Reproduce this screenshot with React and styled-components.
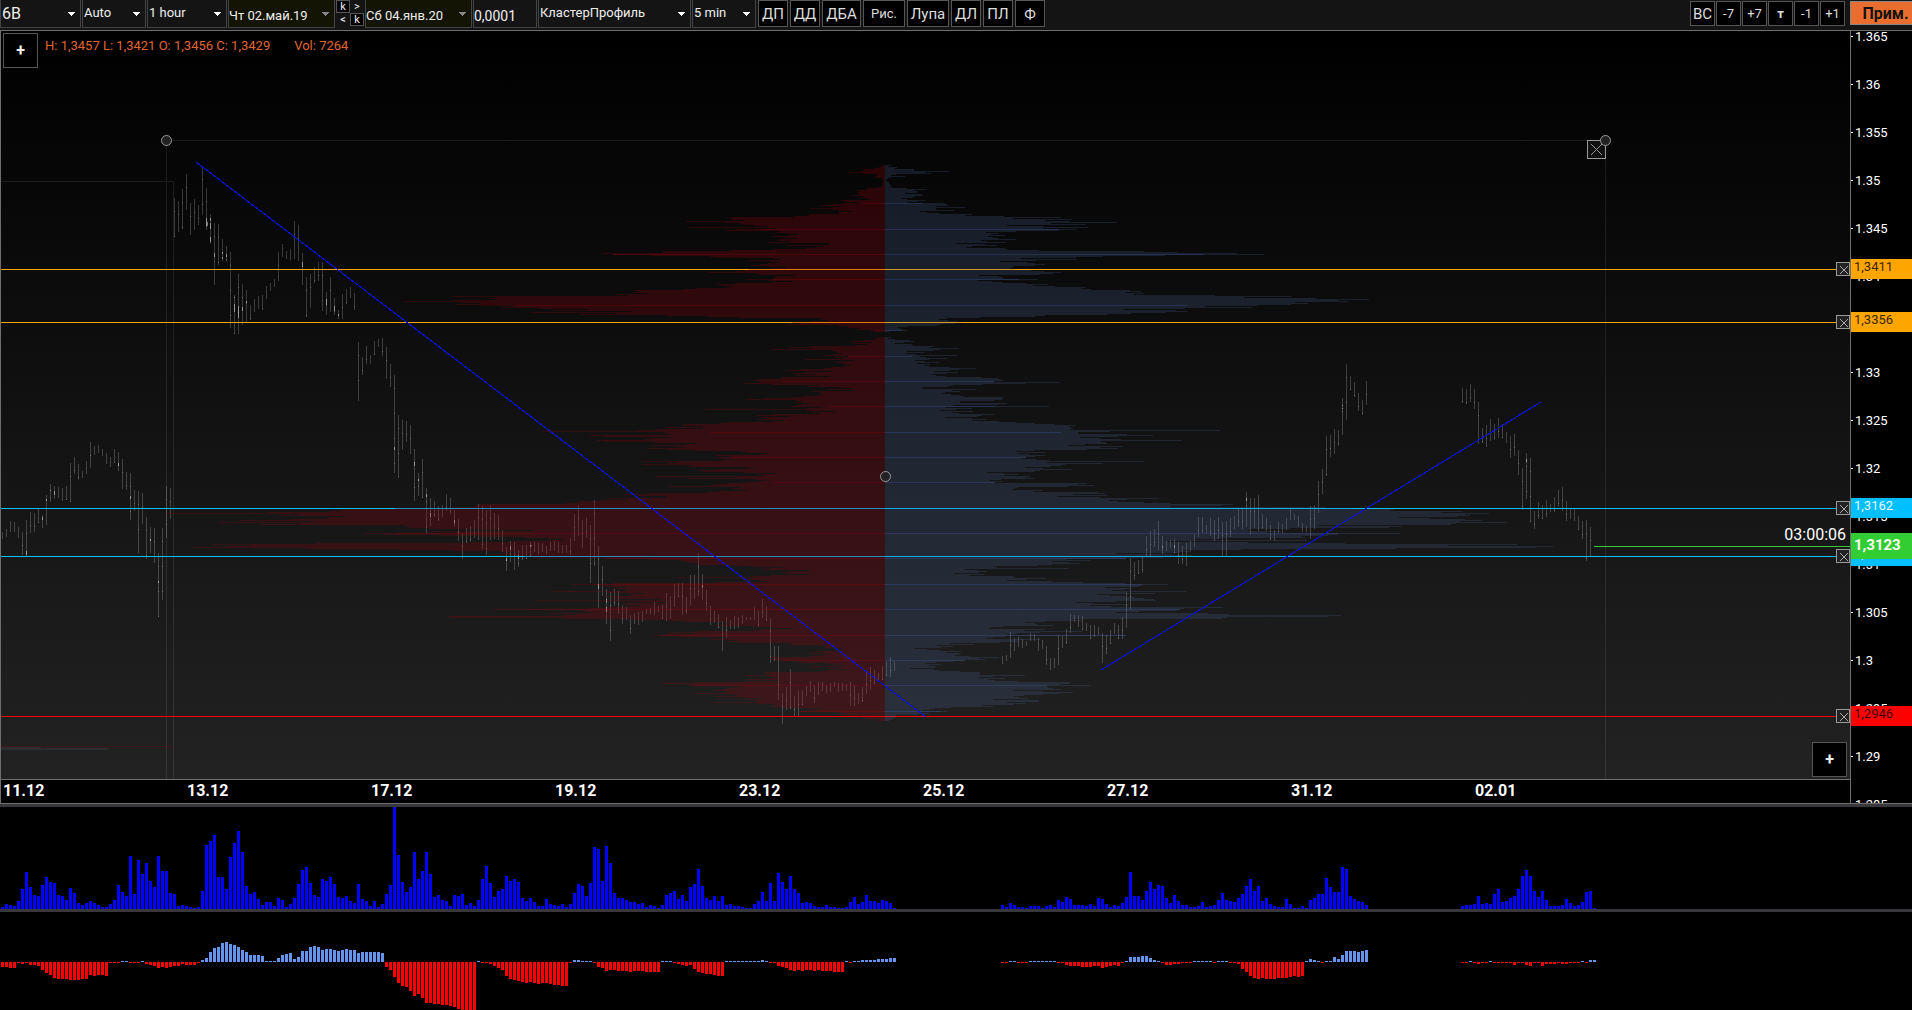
import React from "react";
import styled, { createGlobalStyle } from "styled-components";

const CHART_TOP = 31;
const BAR_STEP = 4;
const PROFILE_X = 885;
const PROFILE_Y = 165;

// one value per price row, 20 rows to a line
const askRows = [
  3, 3, 6, 11, 22, 21, 24, 36, 21, 8, 8, 9, 10, 2, 2, 2, 1, 3, 3, 3,
  3, 3, 8, 18, 18, 30, 25, 27, 27, 26, 33, 21, 24, 20, 15, 44, 39, 28, 41, 51,
  65, 43, 52, 75, 54, 47, 32, 46, 46, 75, 78, 91, 158, 153, 153, 140, 199, 160, 145, 142,
  131, 118, 196, 109, 150, 160, 105, 109, 97, 87, 96, 114, 103, 88, 106, 106, 95, 117, 55, 57,
  98, 61, 68, 79, 112, 154, 222, 222, 283, 272, 234, 175, 169, 112, 104, 136, 115, 107, 117, 125,
  134, 115, 99, 113, 136, 140, 148, 178, 129, 126, 90, 110, 110, 111, 139, 117, 92, 114, 149, 168,
  163, 153, 158, 190, 202, 250, 246, 252, 238, 269, 257, 433, 389, 395, 389, 432, 482, 424, 405, 429,
  405, 374, 384, 345, 296, 332, 254, 355, 270, 305, 218, 178, 146, 61, 65, 56, 75, 93, 85, 98,
  47, 37, 37, 24, 28, 15, 10, 0, 0, 0, 0, 0, 4, 9, 9, 22, 35, 13, 32, 18,
  29, 76, 96, 72, 114, 53, 50, 47, 43, 51, 60, 37, 49, 42, 81, 31, 46, 49, 43, 39,
  35, 41, 53, 61, 85, 99, 53, 80, 92, 70, 89, 55, 103, 105, 126, 131, 125, 126, 142, 114,
  66, 78, 46, 33, 58, 31, 73, 64, 66, 62, 68, 82, 92, 121, 139, 89, 83, 89, 75, 84,
  88, 94, 63, 78, 180, 78, 49, 73, 65, 112, 129, 95, 123, 117, 127, 101, 112, 158, 166, 202,
  202, 182, 219, 182, 229, 247, 342, 222, 219, 214, 295, 280, 214, 235, 240, 288, 280, 230, 189, 198,
  234, 210, 201, 237, 217, 191, 144, 137, 117, 125, 169, 155, 165, 167, 150, 162, 243, 208, 218, 243,
  193, 198, 137, 131, 168, 185, 181, 142, 109, 127, 122, 230, 148, 198, 130, 119, 127, 138, 158, 167,
  175, 217, 144, 152, 147, 137, 167, 177, 238, 260, 246, 218, 218, 277, 258, 284, 306, 308, 319, 405,
  408, 410, 432, 490, 542, 545, 555, 618, 719, 586, 604, 540, 557, 557, 595, 646, 572, 666, 584, 626,
  480, 478, 475, 455, 405, 352, 454, 429, 521, 501, 444, 405, 362, 337, 321, 338, 372, 413, 569, 673,
  634, 659, 692, 579, 485, 431, 385, 368, 383, 398, 372, 360, 352, 275, 235, 205, 200, 197, 187, 190,
  148, 132, 102, 115, 122, 75, 95, 103, 100, 77, 115, 132, 208, 133, 138, 125, 117, 168, 272, 312,
  272, 280, 260, 272, 258, 260, 333, 277, 242, 257, 253, 280, 268, 275, 225, 349, 247, 218, 258, 262,
  245, 255, 278, 295, 391, 305, 300, 292, 338, 310, 322, 435, 438, 322, 250, 215, 199, 155, 160, 160,
  170, 132, 115, 93, 122, 132, 188, 216, 192, 218, 231, 205, 157, 162, 175, 148, 157, 148, 93, 95,
  58, 62, 60, 42, 51, 43, 68, 60, 75, 58, 63, 72, 115, 110, 115, 103, 83, 88, 56, 52,
  42, 75, 45, 57, 38, 57, 65, 120, 120, 115, 139, 117, 107, 115, 137, 107, 136, 190, 225, 198,
  195, 145, 150, 158, 162, 170, 157, 162, 190, 152, 148, 169, 142, 122, 138, 130, 127, 172, 128, 107,
  114, 113, 102, 65, 78, 68, 85, 48, 43, 45, 35, 28, 23, 19, 5, 8,
];

const bidRows = [
  6, 3, 12, 10, 29, 29, 64, 40, 46, 11, 6, 20, 5, 3, 1, 1, 2, 4, 4, 5,
  6, 5, 7, 21, 42, 30, 33, 32, 20, 36, 38, 30, 28, 17, 22, 41, 33, 22, 60, 62,
  64, 51, 80, 51, 51, 69, 35, 42, 54, 87, 80, 119, 176, 128, 187, 160, 185, 232, 166, 201,
  122, 159, 203, 158, 192, 173, 131, 101, 113, 106, 120, 103, 108, 113, 131, 96, 102, 121, 71, 100,
  112, 87, 82, 120, 122, 154, 259, 292, 352, 379, 280, 218, 191, 136, 192, 151, 115, 142, 150, 160,
  149, 129, 128, 125, 130, 146, 159, 176, 168, 155, 94, 114, 118, 118, 153, 92, 107, 117, 141, 163,
  148, 170, 201, 196, 206, 245, 256, 241, 259, 249, 330, 406, 359, 431, 484, 453, 463, 410, 423, 406,
  372, 320, 367, 300, 239, 291, 302, 281, 246, 222, 160, 150, 95, 61, 54, 63, 72, 76, 70, 56,
  52, 23, 12, 15, 18, 22, 4, 0, 0, 0, 0, 0, 6, 3, 10, 25, 29, 19, 10, 27,
  28, 49, 45, 74, 55, 48, 22, 39, 21, 31, 72, 35, 41, 62, 44, 30, 40, 54, 32, 45,
  39, 44, 65, 91, 74, 64, 49, 73, 61, 47, 51, 60, 96, 113, 115, 118, 109, 175, 140, 98,
  68, 63, 38, 37, 91, 67, 75, 60, 57, 66, 75, 79, 118, 118, 117, 109, 75, 75, 122, 113,
  68, 164, 60, 87, 71, 55, 88, 67, 74, 109, 97, 92, 60, 87, 101, 87, 114, 131, 149, 170,
  191, 184, 186, 188, 185, 335, 225, 193, 193, 242, 268, 233, 195, 215, 236, 297, 216, 220, 222, 200,
  183, 238, 215, 233, 202, 149, 131, 160, 132, 145, 160, 150, 141, 136, 151, 164, 259, 162, 218, 180,
  176, 165, 140, 158, 187, 155, 150, 102, 119, 133, 119, 145, 140, 149, 116, 105, 117, 110, 202, 193,
  209, 183, 132, 130, 127, 157, 148, 213, 220, 188, 222, 172, 215, 274, 242, 224, 233, 259, 285, 348,
  337, 285, 441, 467, 509, 505, 578, 556, 604, 580, 585, 572, 514, 545, 580, 597, 575, 622, 571, 566,
  434, 516, 504, 405, 365, 363, 396, 382, 515, 453, 443, 417, 420, 335, 309, 422, 283, 363, 460, 632,
  563, 668, 651, 511, 356, 297, 306, 294, 231, 287, 307, 290, 278, 241, 181, 205, 167, 184, 195, 167,
  153, 108, 112, 183, 79, 92, 102, 94, 69, 99, 84, 128, 129, 161, 141, 122, 167, 198, 240, 283,
  257, 254, 220, 245, 240, 227, 301, 240, 270, 212, 225, 240, 250, 259, 269, 271, 231, 191, 207, 244,
  205, 226, 338, 299, 295, 292, 254, 231, 323, 344, 456, 443, 342, 337, 188, 198, 160, 140, 150, 153,
  169, 118, 106, 103, 160, 139, 198, 155, 132, 122, 241, 120, 108, 101, 155, 132, 134, 115, 65, 89,
  52, 68, 56, 29, 42, 55, 76, 61, 74, 75, 70, 84, 114, 94, 100, 80, 68, 51, 40, 56,
  44, 51, 50, 25, 49, 54, 75, 95, 95, 94, 140, 108, 94, 120, 103, 110, 132, 186, 184, 174,
  206, 162, 163, 168, 176, 128, 158, 188, 174, 158, 139, 129, 134, 143, 108, 154, 154, 122, 141, 128,
  98, 108, 66, 49, 44, 37, 62, 35, 44, 33, 11, 11, 11, 9, 7, 4,
];

// round price levels: [y, ask length, bid length]
const levels = [
  [203, 23, 38], [229, 125, 174], [254, 272, 319], [279, 113, 134], [305, 370, 302],
  [330, 10, 16], [356, 37, 27], [381, 102, 109], [406, 56, 110], [432, 175, 176],
  [457, 152, 141], [482, 112, 109], [533, 489, 453], [558, 280, 241], [584, 291, 257],
  [609, 358, 295], [635, 225, 241], [660, 103, 80], [685, 190, 162], [711, 85, 56],
];

const candleRuns = [
  {
    start: 0,
    bars: [
      [532, 539], [529, 537], [521, 532], [522, 532], [527, 538], [532, 555], [520, 556], [512, 533],
      [513, 532], [509, 523], [515, 528], [495, 525], [484, 502], [486, 499], [487, 498], [488, 501],
      [486, 500], [463, 502], [457, 474], [464, 480], [471, 478], [461, 474], [442, 468], [446, 455],
      [445, 453], [449, 456], [453, 464], [457, 467], [449, 463], [452, 471], [459, 489], [472, 490],
      [473, 520], [490, 511], [491, 553], [493, 524], [517, 559], [527, 553], [528, 563], [553, 617],
      [528, 600], [486, 538], [488, 519], [198, 237], [201, 232], [189, 229], [174, 210], [203, 235],
      [199, 230], [205, 225], [166, 215], [188, 230], [214, 244], [223, 285], [224, 265], [239, 261],
      [246, 262], [252, 328], [295, 334], [274, 334], [284, 325], [290, 322], [305, 320], [299, 312],
      [296, 309], [295, 310], [286, 299], [283, 291], [279, 287], [252, 281], [244, 257], [251, 259],
      [249, 260], [221, 259], [225, 261], [253, 285], [277, 317], [274, 308], [267, 283], [262, 281],
      [262, 311], [292, 315], [277, 312], [298, 315], [310, 319], [294, 319], [289, 304], [287, 298],
      [293, 310], [342, 401], [357, 375], [346, 364], [355, 364], [341, 355], [339, 347], [338, 356],
      [347, 379], [364, 387], [375, 473], [415, 478], [420, 450], [421, 442], [425, 454], [449, 501],
      [473, 496], [459, 498], [488, 533], [498, 526], [501, 517], [506, 521], [505, 517], [494, 511],
      [498, 514], [510, 527], [519, 541], [533, 559], [528, 543], [526, 542], [520, 538], [504, 540],
      [506, 549], [510, 555], [505, 540], [513, 539], [515, 540], [530, 552], [547, 571], [541, 562],
      [542, 570], [550, 567], [545, 560], [545, 559], [542, 556], [542, 552], [543, 554], [543, 552],
      [546, 554], [542, 551], [541, 551], [542, 553], [545, 553], [545, 553], [538, 555], [514, 541],
      [505, 536], [520, 548], [518, 538], [525, 583], [500, 566], [546, 608], [566, 596], [589, 624],
      [592, 641], [589, 606], [591, 614], [605, 624], [607, 620], [615, 634], [613, 624], [612, 625],
      [611, 622], [609, 614], [608, 614], [602, 615], [606, 612], [605, 619], [593, 621], [596, 619],
      [584, 607], [583, 597], [583, 615], [597, 614], [575, 606], [575, 599], [553, 596], [574, 600],
      [590, 611], [606, 625], [611, 623], [614, 628], [621, 651], [617, 638], [620, 629], [616, 629],
      [617, 628], [615, 624], [617, 620], [617, 620], [607, 620], [611, 627], [599, 618], [606, 621],
      [618, 663], [646, 661], [646, 700], [693, 724], [687, 710], [669, 709], [696, 716], [691, 716],
      [691, 705], [686, 696], [681, 692], [685, 703], [682, 695], [682, 691], [685, 693], [683, 692],
      [682, 687], [683, 692], [683, 691], [684, 691], [682, 706], [685, 706], [693, 704], [687, 702],
      [671, 694], [667, 689], [670, 684], [673, 682], [666, 680], [662, 676], [657, 677], [661, 671],
    ],
  },
  {
    start: 250,
    bars: [
      [656, 664], [655, 661], [632, 658], [638, 651], [637, 647], [639, 648], [641, 646], [633, 641],
      [634, 641], [638, 651], [640, 649], [646, 665], [658, 670], [658, 668], [635, 665], [636, 648],
      [629, 644], [614, 633], [615, 622], [615, 627], [616, 630], [623, 631], [625, 639], [625, 637],
      [627, 635], [633, 663], [635, 654], [630, 644], [623, 634], [625, 639], [617, 639], [592, 628],
      [558, 609], [562, 580], [560, 574], [556, 573], [536, 557], [531, 556], [529, 547], [521, 550],
      [536, 554], [541, 551], [540, 548], [539, 553], [542, 564], [546, 564], [543, 566], [541, 551],
      [534, 547], [517, 537], [517, 533], [525, 533], [518, 536], [520, 541], [517, 539], [522, 556],
      [521, 556], [518, 537], [516, 529], [508, 527], [508, 529], [492, 527], [498, 535], [498, 528],
      [495, 531], [514, 529], [518, 531], [525, 540], [530, 541], [522, 533], [524, 533], [518, 530],
      [509, 520], [514, 520], [516, 527], [523, 532], [526, 532], [506, 539], [505, 529], [481, 513],
      [469, 494], [436, 476], [435, 457], [429, 454], [430, 446], [398, 435], [364, 420], [376, 390],
      [382, 397], [393, 411], [400, 415], [381, 405],
    ],
  },
  {
    start: 365,
    bars: [
      [388, 403], [389, 404], [384, 402], [389, 409], [402, 444], [428, 443], [425, 447], [419, 441],
      [424, 440], [418, 438], [424, 438], [432, 443], [436, 458], [434, 456], [450, 475], [468, 510],
      [453, 499], [458, 522], [511, 529], [502, 519], [505, 519], [500, 517], [504, 512], [497, 512],
      [490, 507], [487, 511], [501, 521], [508, 519], [509, 521], [516, 530], [521, 539], [520, 561],
      [527, 556],
    ],
  },
];

// [x, y, height] of the densest clusters
const hotSpots = [
  [206, 218, 8], [207, 222, 4], [210, 218, 3], [210, 223, 6], [210, 237, 5], [214, 253, 4],
  [222, 252, 2], [222, 257, 2], [226, 254, 3], [234, 297, 1], [234, 304, 8], [238, 306, 12],
  [242, 307, 4], [246, 301, 2], [302, 262, 5], [326, 299, 6], [334, 306, 5], [338, 314, 2],
  [118, 463, 3], [130, 496, 3], [50, 490, 1], [54, 491, 4], [42, 517, 3], [46, 499, 2],
  [26, 551, 4], [150, 539, 2], [158, 581, 2], [394, 447, 3], [414, 462, 4], [418, 479, 2],
  [426, 494, 3], [430, 513, 4], [454, 520, 3], [506, 558, 3], [510, 546, 4], [518, 555, 4],
  [530, 545, 2], [531, 545, 1], [598, 584, 5], [606, 599, 3], [606, 607, 5], [702, 585, 2],
  [1162, 546, 2], [1174, 545, 3], [1246, 498, 3], [1342, 405, 1], [1342, 408, 1], [1526, 459, 3],
];

const volumeRuns = [
  {
    start: 0,
    bars: [
      2, 5, 4, 3, 8, 20, 37, 22, 14, 13, 24, 32, 27, 26, 14, 13, 9, 21, 16, 6,
      4, 6, 8, 6, 4, 2, 2, 5, 9, 24, 17, 13, 53, 15, 49, 35, 46, 28, 22, 53,
      38, 38, 16, 15, 3, 4, 3, 2, 1, 2, 18, 64, 68, 74, 32, 32, 20, 52, 66, 78,
      57, 23, 15, 17, 10, 4, 7, 7, 3, 11, 9, 2, 5, 11, 25, 39, 42, 26, 14, 12,
      30, 28, 32, 25, 12, 11, 13, 8, 6, 25, 10, 8, 3, 8, 2, 5, 15, 24, 102, 54,
      27, 17, 22, 57, 30, 38, 57, 35, 12, 14, 9, 8, 3, 14, 13, 15, 4, 6, 3, 9,
      30, 43, 26, 12, 18, 20, 33, 28, 30, 27, 11, 8, 11, 7, 3, 3, 10, 5, 4, 3,
      5, 2, 5, 16, 25, 23, 13, 26, 62, 60, 28, 63, 46, 16, 11, 11, 9, 7, 7, 5,
      6, 2, 4, 3, 1, 4, 14, 16, 18, 10, 14, 8, 22, 25, 40, 23, 11, 9, 13, 8,
      13, 4, 5, 3, 3, 2, 1, 1, 5, 8, 17, 8, 26, 8, 36, 27, 20, 33, 20, 16,
      6, 7, 6, 3, 2, 2, 4, 2, 2, 1, 1, 2, 7, 12, 5, 7, 14, 8, 8, 6,
      9, 8, 6, 1,
    ],
  },
  {
    start: 250,
    bars: [
      4, 2, 6, 4, 2, 2, 1, 3, 3, 3, 1, 3, 4, 2, 9, 7, 12, 10, 4, 4,
      4, 3, 5, 3, 11, 10, 5, 2, 4, 3, 6, 12, 37, 13, 13, 9, 18, 27, 20, 24,
      23, 11, 6, 14, 8, 4, 4, 2, 2, 3, 7, 2, 3, 4, 9, 16, 9, 8, 7, 11,
      15, 23, 30, 18, 23, 8, 11, 5, 3, 2, 2, 10, 5, 1, 1, 3, 1, 9, 11, 15,
      15, 31, 22, 17, 17, 42, 40, 13, 10, 8, 7, 4,
    ],
  },
  {
    start: 365,
    bars: [
      3, 4, 4, 5, 13, 5, 6, 5, 15, 20, 7, 8, 11, 13, 20, 33, 39, 33, 18, 12,
      18, 9, 3, 3, 3, 4, 10, 6, 3, 4, 7, 17, 18, 1,
    ],
  },
];

const deltaRuns = [
  {
    start: 0,
    bars: [
      -5, -5, -6, -6, -1, -2, -1, -3, -3, -4, -8, -11, -13, -16, -17, -17, -17, -18, -18, -18,
      -17, -17, -13, -14, -13, -13, -14, -1, -1, -1, 1, 1, -1, -1, -1, 1, -2, -3, -4, -6,
      -5, -6, -5, -4, -4, -2, -3, -3, -3, -1, 2, 4, 10, 14, 15, 19, 20, 18, 17, 15,
      12, 10, 7, 7, 7, 6, 1, 1, 1, 4, 7, 8, 9, 3, 5, 11, 11, 15, 16, 15,
      12, 13, 13, 12, 11, 12, 13, 12, 12, 9, 10, 10, 10, 10, 10, 9, -5, -8, -15, -21,
      -24, -25, -29, -34, -32, -36, -41, -41, -42, -42, -43, -43, -44, -45, -47, -48, -48, -48, -48, 1,
      -1, -1, -2, -4, -6, -8, -14, -17, -18, -19, -20, -21, -20, -21, -22, -21, -21, -22, -23, -23,
      -24, -24, -1, 2, 2, 1, 1, 1, -1, -5, -6, -9, -8, -8, -9, -9, -9, -10, -9, -9,
      -9, -10, -10, -10, -10, 1, 1, 1, -1, -2, -3, -4, -3, -7, -10, -11, -12, -12, -13, -14,
      -14, 1, 1, 1, 1, 1, 1, 1, 1, 1, 2, 1, -1, -1, -4, -5, -6, -8, -9, -8,
      -9, -8, -8, -9, -8, -9, -9, -9, -10, -10, -10, 1, -1, 1, 1, 2, 2, 2, 2, 3,
      3, 3, 4, 4,
    ],
  },
  {
    start: 250,
    bars: [
      -1, -1, 1, 1, -1, -1, -1, 1, 1, 1, 1, 1, 1, 1, -1, -1, -3, -4, -4, -4,
      -5, -5, -5, -4, -4, -6, -5, -4, -3, -4, -1, 1, 5, 5, 5, 6, 6, 4, 2, 1,
      -1, -3, -3, -2, -2, -1, -1, -1, 1, 1, 1, 1, 1, -1, 1, 1, 1, -1, -1, -2,
      -7, -10, -14, -16, -17, -16, -17, -17, -17, -16, -16, -16, -15, -14, -15, -14, 1, 3, 2, 1,
      -1, 1, 1, 5, 3, 7, 11, 11, 11, 10, 11, 12,
    ],
  },
  {
    start: 365,
    bars: [
      -1, -1, 1, -1, -2, -1, -1, 1, -1, -1, -1, -1, -1, -3, -1, -1, -3, -4, -1, -1,
      -4, -2, -2, -2, -1, -2, -2, -1, -1, -1, 1, -1, 2, 2,
    ],
  },
];

const priceTicks = [
  "1.365", "1.36", "1.355", "1.35", "1.345", "1.34", "1.335", "1.33", "1.325",
  "1.32", "1.315", "1.31", "1.305", "1.3", "1.295", "1.29", "1.285",
];

const dates = ["11.12", "13.12", "17.12", "19.12", "23.12", "25.12", "27.12", "31.12", "02.01"];

const priceLines = [
  { price: "1,3411", y: 269, color: "#ffa500", text: "#3a2500" },
  { price: "1,3356", y: 322, color: "#ffa500", text: "#3a2500" },
  { price: "1,3162", y: 508, color: "#00bfff", text: "#e8f8ff" },
  { price: "1,3111", y: 556, color: "#00bfff", text: "#e8f8ff" },
  { price: "1,2946", y: 716, color: "#ff0000", text: "#3a0000" },
];

const drawTools = [
  { label: "ДП", width: 30 },
  { label: "ДД", width: 30 },
  { label: "ДБА", width: 39 },
  { label: "Рис.", width: 42, small: true },
  { label: "Лупа", width: 42 },
  { label: "ДЛ", width: 30 },
  { label: "ПЛ", width: 30 },
  { label: "Ф", width: 30 },
];

const shiftTools = ["ВС", "-7", "+7", "т", "-1", "+1"];

const rowsPath = (rows, dir) =>
  rows
    .map((len, i) => (len ? `M${PROFILE_X} ${PROFILE_Y + i}h${dir * len}v1H${PROFILE_X}z` : ""))
    .join("");

const candlePath = candleRuns
  .flatMap(({ start, bars }) =>
    bars.map(([top, bottom], i) => `M${2 + (start + i) * BAR_STEP} ${top}h1V${bottom}h-1z`)
  )
  .join("");

// brighter ticks where neighbouring clusters join
const jointPath = candleRuns
  .flatMap(({ start, bars }) =>
    bars.flatMap(([top, bottom], i) => {
      const marks = [];
      for (let y = top + 13; y < bottom; y += 25) {
        marks.push(`M${2 + (start + i) * BAR_STEP} ${y}h1v1h-1z`);
      }
      return marks;
    })
  )
  .join("");

const histogramPath = (runs, base, keep = () => true) =>
  runs
    .flatMap(({ start, bars }) =>
      bars.map((v, i) => (keep(v) ? `M${1 + (start + i) * BAR_STEP} ${base}v${-v}h3v${v}z` : ""))
    )
    .join("");

const Caret = ({ color = "#fff" }) => (
  <CaretIcon viewBox="0 0 7 4" aria-hidden="true">
    <path d="M0 0h7v1H6v1H5v1H4v1H3V3H2V2H1V1H0z" fill={color} />
  </CaretIcon>
);

const Picker = ({ label, value, width, large }) => (
  <Field $width={width}>
    <Select aria-label={label} defaultValue={value} $large={large}>
      <option>{value}</option>
    </Select>
    <Caret />
  </Field>
);

const DatePicker = ({ label, value }) => (
  <Field $width={107} $tint>
    <TextInput aria-label={label} defaultValue={value} />
    <Caret color="#888" />
  </Field>
);

const Cross = ({ size = 14 }) => (
  <svg width={size} height={size} viewBox="0 0 14 14" aria-hidden="true">
    <path d="M3 3l8 8M11 3l-8 8" stroke="#aaa" strokeWidth="1" />
  </svg>
);

const Toolbar = () => (
  <Bar>
    <Fields>
      <Picker label="Инструмент" value="6B" width={81} large />
      <Picker label="Масштаб" value="Auto" width={64} />
      <Picker label="Период" value="1 hour" width={80} />
      <DatePicker label="Начало" value="Чт 02.май.19" />
      <StepPad>
        <StepButton $boxed>k</StepButton>
        <StepButton>&gt;</StepButton>
        <StepButton>&lt;</StepButton>
        <StepButton $boxed>k</StepButton>
      </StepPad>
      <DatePicker label="Конец" value="Сб 04.янв.20" />
      <Field $width={64}>
        <TextInput aria-label="Шаг" defaultValue="0,0001" $large />
      </Field>
      <Picker label="Вид" value="КластерПрофиль" width={153} />
      <Picker label="Кластер" value="5 min" width={64} />
    </Fields>
    <Tools>
      {drawTools.map((tool) => (
        <ToolButton key={tool.label} $width={tool.width} $small={tool.small}>
          {tool.label}
        </ToolButton>
      ))}
    </Tools>
    <ShiftTools>
      {shiftTools.map((label, i) => (
        <ShiftButton key={label} $large={i === 0} $bold={label === "т"}>
          {label}
        </ShiftButton>
      ))}
    </ShiftTools>
    <ApplyButton>Прим.</ApplyButton>
  </Bar>
);

const PriceChart = () => (
  <ChartPane>
    <Drawing shapeRendering="crispEdges" aria-hidden="true">
      <g transform={`translate(0 ${-CHART_TOP})`}>
        <path d="M1 746h172v1H1z" fill="rgba(150,0,10,.26)" />
        <path d="M1 747h40v1h68v1h-3v1H1z" fill="#2d2d2f" />
        <path
          d="M0 181h174v598h-1V182H0zM166 140h1440v639h-1V141H167v638h-1z"
          fill="#fff"
          fillOpacity=".09"
        />
        <path d={candlePath} fill="#fff" fillOpacity=".2" />
        <path d={jointPath} fill="#fff" fillOpacity=".22" />
        {hotSpots.map(([x, y, h]) => (
          <rect key={`${x}-${y}`} x={x} y={y} width="1" height={h} fill="#fff" fillOpacity=".45" />
        ))}
        {priceLines.map((line) => (
          <rect key={line.y} x="0" y={line.y} width="100%" height="1" fill={line.color} />
        ))}
        <path d={rowsPath(askRows, -1)} fill="rgba(150,0,10,.26)" />
        <path d={rowsPath(bidRows, 1)} fill="rgba(77,109,163,.22)" />
        {levels.map(([y, ask, bid]) => (
          <g key={y}>
            <rect x={PROFILE_X - ask} y={y} width={ask} height="1" fill="rgba(170,0,10,.25)" />
            <rect x={PROFILE_X} y={y} width={bid} height="1" fill="rgba(70,105,190,.25)" />
          </g>
        ))}
        <path d="M196 162L926 717M1101 670L1541 402" stroke="#0a0aff" strokeWidth="1" />
        <rect x="1594" y="546" width="100%" height="1" fill="#32cd32" />
        <path d="M0 31h1v749H0z" fill="#6e6e6e" />
        <g fill="#222" stroke="#999" shapeRendering="auto">
          <circle cx="166.5" cy="140.5" r="5" />
          <circle cx="885.5" cy="476.5" r="5" />
          <rect x="1587.5" y="140.5" width="18" height="18" fill="#111" />
          <path d="M1591 144l11 11M1602 144l-11 11" />
          <circle cx="1605.5" cy="140.5" r="5" />
        </g>
      </g>
    </Drawing>
    <Legend>
      <AddButton aria-label="Добавить">+</AddButton>
      <Quote>H: 1,3457 L: 1,3421 O: 1,3456 C: 1,3429</Quote>
      <Quote>Vol: 7264</Quote>
    </Legend>
    {priceLines.map((line) => (
      <CloseButton key={line.y} $y={line.y - CHART_TOP} aria-label={`Удалить ${line.price}`}>
        <Cross />
      </CloseButton>
    ))}
    <Countdown>03:00:06</Countdown>
    <CornerButton aria-label="Добавить область">+</CornerButton>
  </ChartPane>
);

const PriceAxis = () => (
  <Axis>
    <TickList>
      {priceTicks.map((tick) => (
        <Tick key={tick}>{tick}</Tick>
      ))}
    </TickList>
    {priceLines.map((line) => (
      <Tag key={line.y} $y={line.y - CHART_TOP} $color={line.color} $text={line.text}>
        {line.price}
      </Tag>
    ))}
    <LastPrice>1,3123</LastPrice>
  </Axis>
);

const App = () => (
  <>
    <GlobalStyle />
    <Page>
      <Toolbar />
      <Main>
        <ChartColumn>
          <PriceChart />
          <DateAxis>
            {dates.map((date) => (
              <DateLabel key={date}>{date}</DateLabel>
            ))}
          </DateAxis>
        </ChartColumn>
        <PriceAxis />
      </Main>
      <Splitter $lined />
      <VolumePane>
        <Drawing shapeRendering="crispEdges" aria-label="Volume" role="img">
          <path d={histogramPath(volumeRuns, 102)} fill="#0000ff" />
        </Drawing>
      </VolumePane>
      <Splitter />
      <DeltaPane>
        <Drawing shapeRendering="crispEdges" aria-label="Delta" role="img">
          <path d={histogramPath(deltaRuns, 50, (v) => v > 0)} fill="#6495ed" />
          <path d={histogramPath(deltaRuns, 50, (v) => v < 0)} fill="#ff0000" />
        </Drawing>
      </DeltaPane>
    </Page>
  </>
);

const GlobalStyle = createGlobalStyle`
  * {
    box-sizing: border-box;
  }

  body {
    margin: 0;
    background: #000;
    color: #eee;
    font-family: Roboto, "Noto Sans", sans-serif;
    font-size: 13px;
    overflow: hidden;
  }

  button,
  input,
  select {
    margin: 0;
    padding: 0;
    color: inherit;
    font-family: inherit;
    border-radius: 0;
  }
`;

const Page = styled.div`
  display: flex;
  flex-direction: column;
  min-height: 100vh;
`;

const Bar = styled.header`
  display: flex;
  align-items: flex-start;
  height: 31px;
  background: #141414;
  border-bottom: 1px solid #6e6e6e;
`;

const Fields = styled.div`
  display: flex;
  gap: 1px;
  margin-right: 2px;
`;

const Field = styled.div`
  display: flex;
  align-items: center;
  width: ${({ $width }) => $width}px;
  height: 28px;
  padding-right: 5px;
  background: ${({ $tint }) => ($tint ? "#141404" : "#141414")};
  border: 1px solid #444;
  border-top: 0;
`;

const Select = styled.select`
  flex: 1;
  min-width: 0;
  height: 24px;
  padding-left: 1px;
  margin-bottom: ${({ $large }) => ($large ? 1 : 3)}px;
  appearance: none;
  background: transparent;
  border: 0;
  outline: 0;
  font-size: ${({ $large }) => ($large ? 16 : 13)}px;
`;

const TextInput = styled.input`
  flex: 1;
  min-width: 0;
  height: 22px;
  margin-top: 4px;
  background: transparent;
  border: 0;
  outline: 0;
  font-size: ${({ $large }) => ($large ? 14 : 13)}px;
`;

const CaretIcon = styled.svg`
  flex: none;
  width: 7px;
  height: 4px;
`;

const StepPad = styled.div`
  display: grid;
  grid-template-columns: 14px 14px;
  grid-template-rows: 13px 13px;
  width: 28px;
`;

const StepButton = styled.button`
  background: ${({ $boxed }) => ($boxed ? "#000" : "transparent")};
  border: 1px solid ${({ $boxed }) => ($boxed ? "#555" : "transparent")};
  font-size: 11px;
  line-height: 11px;
`;

const Tools = styled.div`
  display: flex;
  gap: 2px;
`;

const ToolButton = styled.button`
  width: ${({ $width }) => $width}px;
  height: 27px;
  background: #000;
  border: 1px solid #555;
  color: #ddd;
  font-size: ${({ $small }) => ($small ? 13 : 15)}px;
`;

const ShiftTools = styled.div`
  display: flex;
  gap: 1px;
  margin: 1px 5px 0 auto;
`;

const ShiftButton = styled.button`
  width: 25px;
  height: 25px;
  background: #000;
  border: 1px solid #555;
  color: #ddd;
  font-size: ${({ $large }) => ($large ? 15 : 13)}px;
  font-weight: ${({ $bold }) => ($bold ? 700 : 400)};
`;

const ApplyButton = styled.button`
  width: 62px;
  height: 24px;
  margin-top: 1px;
  padding-left: 8px;
  background: #e96d2e;
  border: 1px solid #888;
  border-right: 0;
  color: #111;
  font-size: 16px;
  font-weight: 700;
`;

const Main = styled.main`
  display: flex;
  background: #000;
`;

const ChartColumn = styled.div`
  flex: 1;
  min-width: 0;
`;

const ChartPane = styled.section`
  position: relative;
  height: 749px;
  background: linear-gradient(#000, #222);
  border-bottom: 1px solid #6e6e6e;
  overflow: hidden;
`;

const Drawing = styled.svg`
  position: absolute;
  inset: 0;
  width: 100%;
  height: 100%;
  fill: none;
`;

const Legend = styled.div`
  position: relative;
  display: flex;
  gap: 24px;
  padding: 2px 3px;
`;

const AddButton = styled.button`
  width: 35px;
  height: 35px;
  margin-right: -17px;
  background: #000;
  border: 1px solid #555;
  font-size: 16px;
  font-weight: 700;
`;

const Quote = styled.span`
  padding-top: 4px;
  color: #e0662e;
  font-size: 13px;
  line-height: 18px;
`;

const CloseButton = styled.button`
  position: absolute;
  top: ${({ $y }) => $y - 7}px;
  right: 0;
  display: grid;
  place-items: center;
  width: 14px;
  height: 14px;
  background: #222;
  border: 1px solid #999;
`;

const Countdown = styled.time`
  position: absolute;
  top: 494px;
  right: 4px;
  color: #fff;
  font-size: 16px;
  line-height: 20px;
`;

const CornerButton = styled(AddButton)`
  position: absolute;
  right: 3px;
  bottom: 2px;
  margin: 0;
`;

const DateAxis = styled.div`
  display: flex;
  height: 23px;
  padding-left: 2px;
  background: #000;
  border-left: 1px solid #6e6e6e;
  overflow: hidden;
`;

const DateLabel = styled.span`
  flex: 0 0 184px;
  color: #fff;
  font-size: 16px;
  font-weight: 700;
  line-height: 22px;
`;

const Axis = styled.aside`
  position: relative;
  width: 62px;
  height: 772px;
  border-left: 1px solid #6e6e6e;
  overflow: hidden;
`;

const TickList = styled.div`
  margin-top: -19px;
`;

const Tick = styled.div`
  display: flex;
  align-items: center;
  gap: 2px;
  height: 48px;
  color: #fff;

  &::before {
    content: "";
    width: 2px;
    height: 1px;
    background: #fff;
  }
`;

const Tag = styled.div`
  position: absolute;
  top: ${({ $y }) => $y - 10}px;
  left: 0;
  right: 0;
  height: 20px;
  padding-left: 3px;
  background: ${({ $color }) => $color};
  color: ${({ $text }) => $text};
  line-height: 16px;
`;

const LastPrice = styled.div`
  position: absolute;
  top: 502px;
  left: 0;
  right: 0;
  height: 26px;
  padding-left: 3px;
  background: #32cd32;
  color: #fff;
  font-size: 15px;
  font-weight: 700;
  line-height: 24px;
`;

const Splitter = styled.div`
  height: ${({ $lined }) => ($lined ? 4 : 3)}px;
  background: #38383c;
  border-top: ${({ $lined }) => ($lined ? "1px solid #6e6e6e" : "0")};
`;

const VolumePane = styled.section`
  position: relative;
  height: 102px;
`;

const DeltaPane = styled.section`
  position: relative;
  flex: 1;
  min-height: 98px;
`;

export default App;
